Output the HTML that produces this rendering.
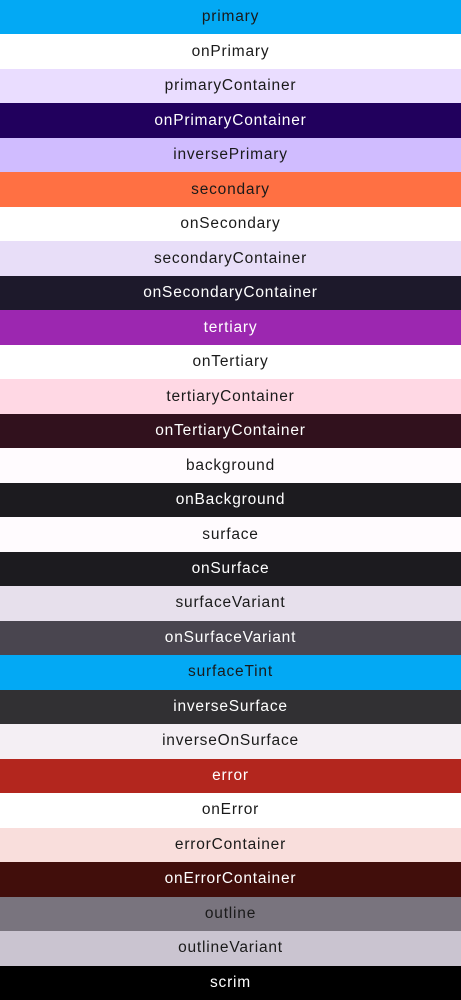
<!DOCTYPE html>
<html><head><meta charset="utf-8"><style>
html,body{margin:0;padding:0;width:461px;height:1000px;overflow:hidden}
body{display:flex;flex-direction:column;font-family:"Liberation Sans",sans-serif;font-size:15.5px;letter-spacing:0.8px}
div{flex:1;display:flex;align-items:center;justify-content:center;color:#1a1a1a}
.d{color:#fff}
</style></head><body>
<div style="background:#03A9F4">primary</div>
<div style="background:#FFFFFF">onPrimary</div>
<div style="background:#EADDFF">primaryContainer</div>
<div class="d" style="background:#21005D">onPrimaryContainer</div>
<div style="background:#D0BCFF">inversePrimary</div>
<div style="background:#FF7043">secondary</div>
<div style="background:#FFFFFF">onSecondary</div>
<div style="background:#E8DEF8">secondaryContainer</div>
<div class="d" style="background:#1D192B">onSecondaryContainer</div>
<div class="d" style="background:#9C27B0">tertiary</div>
<div style="background:#FFFFFF">onTertiary</div>
<div style="background:#FFD8E4">tertiaryContainer</div>
<div class="d" style="background:#31111D">onTertiaryContainer</div>
<div style="background:#FFFBFE">background</div>
<div class="d" style="background:#1C1B1F">onBackground</div>
<div style="background:#FFFBFE">surface</div>
<div class="d" style="background:#1C1B1F">onSurface</div>
<div style="background:#E7E0EC">surfaceVariant</div>
<div class="d" style="background:#49454F">onSurfaceVariant</div>
<div style="background:#03A9F4">surfaceTint</div>
<div class="d" style="background:#313033">inverseSurface</div>
<div style="background:#F4EFF4">inverseOnSurface</div>
<div class="d" style="background:#B3261E">error</div>
<div style="background:#FFFFFF">onError</div>
<div style="background:#F9DEDC">errorContainer</div>
<div class="d" style="background:#410E0B">onErrorContainer</div>
<div style="background:#79747E">outline</div>
<div style="background:#CAC4D0">outlineVariant</div>
<div class="d" style="background:#000000">scrim</div>
</body></html>
